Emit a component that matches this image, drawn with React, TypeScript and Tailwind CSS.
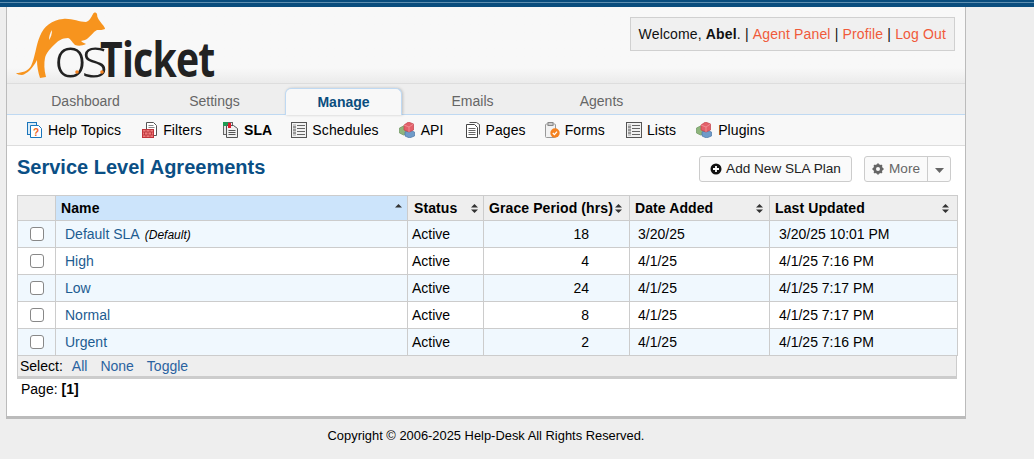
import React from "react";

const Cubes = () => (
  <svg width="17" height="16" viewBox="0 0 17 16" className="shrink-0">
    <path d="M0.500 6l4-2 4 2v5l-4 2-4-2z" fill="#8fb57c" stroke="#6d9560" strokeWidth="0.7" />
    <path d="M6 10l4.500-2 5 2v4l-5 2-4.500-2z" fill="#6f9bc9" stroke="#4c77a6" strokeWidth="0.7" />
    <path d="M5 3l4.500-3 5 2v6l-4.500 2-5-2z" fill="#e4606a" stroke="#c2424c" strokeWidth="0.7" />
    <path d="M5 3l5 2 4.500-3M10 5v5" fill="none" stroke="#f3a0a5" strokeWidth="0.7" />
  </svg>
);

const ListIcon = () => (
  <svg width="16" height="16" viewBox="0 0 16 16" className="shrink-0">
    <rect x="0.5" y="0.5" width="15" height="15" fill="#f2f2f2" stroke="#555" />
    <rect x="2" y="2" width="3" height="12" fill="#c9c9c9" />
    <path d="M6 3.500h8M6 6.500h8M6 9.500h8M6 12.500h8M2 5h3M2 8h3M2 11h3" stroke="#666" strokeWidth="1" />
  </svg>
);

const HelpIcon = () => (
  <svg width="16" height="16" viewBox="0 0 16 16" className="shrink-0">
    <rect x="0.5" y="0.5" width="9" height="12" fill="#d9ebf7" stroke="#1b75bb" />
    <path d="M3.500 3.500h8l3 3v9h-11z" fill="#fff" stroke="#1b75bb" />
    <text x="9" y="13.5" fontSize="10" fontWeight="700" fill="#f26522" textAnchor="middle" fontFamily="Liberation Sans">?</text>
  </svg>
);

const FilterIcon = () => (
  <svg width="16" height="16" viewBox="0 0 16 16" className="shrink-0">
    <path d="M4.500 0.500h7l3 3v10h-10z" fill="#fff" stroke="#555" />
    <path d="M6.500 3.500h5M6.500 5.500h6" stroke="#888" />
    <rect x="0.5" y="7.5" width="11" height="8" fill="#ee7b7b" stroke="#c0333a" />
    <path d="M1 10h10M1 13h10M4 8v2M8 8v2M2.500 10v3M6 10v3M9.500 10v3M4 13v2M8 13v2" stroke="#b22b32" strokeWidth="0.7" />
  </svg>
);

const SlaIcon = () => (
  <svg width="16" height="16" viewBox="0 0 16 16" className="shrink-0">
    <rect x="0.5" y="0.5" width="9" height="12" fill="#e8e8e8" stroke="#666" />
    <rect x="0" y="0" width="5" height="4" fill="#1f9d55" />
    <path d="M3.500 3.500h7l4 3v9h-11z" fill="#f1f1f1" stroke="#555" />
    <rect x="5" y="1" width="3" height="5" fill="#e11d2e" />
    <path d="M5.500 8.500h7M5.500 10.500h7M5.500 12.500h7" stroke="#555" />
  </svg>
);

const PagesIcon = () => (
  <svg width="16" height="16" viewBox="0 0 16 16" className="shrink-0">
    <path d="M4.500 0.500h7l3 2v10" fill="none" stroke="#555" />
    <path d="M1.500 2.500h8l3 3v10h-11z" fill="#fff" stroke="#444" />
    <path d="M3.500 6.500h7M3.500 8.500h7M3.500 10.500h7M3.500 12.500h7" stroke="#666" />
  </svg>
);

const FormsIcon = () => (
  <svg width="16" height="16" viewBox="0 0 16 16" className="shrink-0">
    <rect x="1.5" y="2" width="10" height="13.5" rx="1" fill="#f2f2f2" stroke="#999" />
    <rect x="4" y="0.5" width="5" height="3" fill="#ccc" stroke="#888" />
    <circle cx="11" cy="11" r="4.7" fill="#f58220" />
    <path d="M8.800 11l1.600 1.600 2.600-3" fill="none" stroke="#fff" strokeWidth="1.3" />
  </svg>
);

const navItems: { icon: React.ReactNode; label: string; bold?: boolean; cls?: string }[] = [
  { icon: <HelpIcon />, label: "Help Topics" },
  { icon: <FilterIcon />, label: "Filters" },
  { icon: <SlaIcon />, label: "SLA", bold: true, cls: "-mr-[2px]" },
  { icon: <ListIcon />, label: "Schedules", cls: "-mr-[1px]" },
  { icon: <Cubes />, label: "API" },
  { icon: <PagesIcon />, label: "Pages", cls: "-mr-[3px]" },
  { icon: <FormsIcon />, label: "Forms" },
  { icon: <ListIcon />, label: "Lists", cls: "-mr-[1px]" },
  { icon: <Cubes />, label: "Plugins" },
];

const Sort = ({ only }: { only?: boolean }) => (
  <svg width="7" height="11" viewBox="0 0 7 11" className="shrink-0">
    <path d="M3.500 1L7 4.500H0z" fill="#333" />
    {!only && <path d="M3.500 10L0 6.500H7z" fill="#333" />}
  </svg>
);

const rows = [
  ["Default SLA", "18", "3/20/25", "3/20/25 10:01 PM"],
  ["High", "4", "4/1/25", "4/1/25 7:16 PM"],
  ["Low", "24", "4/1/25", "4/1/25 7:17 PM"],
  ["Normal", "8", "4/1/25", "4/1/25 7:17 PM"],
  ["Urgent", "2", "4/1/25", "4/1/25 7:16 PM"],
];

const heads: [string, string][] = [
  ["Name", "pl-[5px] pr-[5px]"],
  ["Status", "pl-[6px] pr-[5px]"],
  ["Grace Period (hrs)", "pl-[5px] pr-[7px]"],
  ["Date Added", "pl-[5px] pr-[6px]"],
  ["Last Updated", "pl-[5px] pr-[8px]"],
];

const Kangaroo = () => (
  <svg width="100" height="75" viewBox="10 5 100 75" className="absolute left-[3px] top-[-2px]">
    <path
      d="M16 73 C22 73 28 71 31 66 C35 58 36 45 40 36 C44 26 52 20 63 19 C71 18 79 22 86 22 C89 21 91 18 93 14 C94 12 96 12 97 14 C97 18 99 20 102 24 C104 26 105 28 105 29 C103 30 100 30 97 30 C93 32 91 36 87 39 L85 40 L81 41 C83 43 85 43 86 44 C82 46 78 46 75 45 C72 42 70 38 68 38 C62 38 58 41 55 44 C50 49 46 53 45 58 C44 63 44 70 46 77 L40 78 C38 72 37 66 37 60 C33 68 27 74 22 75 C19 75 17 74 16 73 Z"
      fill="#f7941e"
    />
    <path d="M52 30 C50 33 49 36 49 40 C51 37 52 34 52 30Z" fill="#f8f8f8" />
    <circle cx="77" cy="72" r="1.8" fill="#f58220" />
    <circle cx="102" cy="72" r="1.8" fill="#f58220" />
  </svg>
);

export default function App() {
  return (
    <div className="min-h-[459px] bg-[#eeeeee] text-[14px] text-black" style={{ fontFamily: '"Liberation Sans", Arial, sans-serif' }}>
      <div className="h-[7px] bg-[#0a4d7e] pt-[2px]">
        <div className="h-px bg-[#5f8fb0]" />
      </div>
      <div className="ml-[6px] w-[960px] border-x border-b-[3px] border-[#bbbbbb] bg-white">
        <div className="relative flex h-[76px] items-start justify-end bg-gradient-to-b from-[#f8f8f8] from-80% to-[#ebebeb] pr-[10px] pt-[10px]">
          <div className="absolute left-[47px] top-[20px] flex items-baseline leading-none text-[#222222]" style={{ fontFamily: '"Open Sans", sans-serif' }}>
            <span className="w-[46px] text-[56px] font-light tracking-[-5px]">os</span>
            <span className="origin-left scale-x-[0.8] text-[49px] font-bold tracking-[-1px]">Ticket</span>
          </div>
          <Kangaroo />
          <div className="flex h-[34px] items-center border border-[#d0d0d0] bg-[#f0f0f0] px-[8px] text-[14px] tracking-[0.15px] text-[#111]">
            <span>Welcome, <b>Abel</b>.&nbsp;|&nbsp;</span>
            <span className="text-[#f05a3a]">Agent Panel</span>
            <span>&nbsp;|&nbsp;</span>
            <span className="text-[#f05a3a]">Profile</span>
            <span>&nbsp;|&nbsp;</span>
            <span className="text-[#f05a3a]">Log Out</span>
          </div>
        </div>
        <div className="flex h-[32px] items-end gap-[12px] border-t border-b border-t-[#dddddd] border-b-[#bfd9f2] bg-[#eeeeee] pl-[20px]">
          {["Dashboard", "Settings", "Manage", "Emails", "Agents"].map((t) =>
            t === "Manage" ? (
              <div key={t} className="relative -mb-px flex h-[27px] w-[117px] items-center justify-center rounded-t-[6px] border-x border-t border-[#bfd9f2] bg-[#f8f8f8] pt-[1px] font-bold text-[#0a4d7e] shadow-[1px_0_3px_rgba(0,0,0,0.2)]">
                {t}
              </div>
            ) : (
              <div key={t} className="flex h-[29px] w-[117px] items-center justify-center pt-[3px] text-[#666666]">
                {t}
              </div>
            )
          )}
        </div>
        <div className="flex h-[31px] items-center gap-[21px] border-b border-[#dddddd] bg-[#f8f8f8] pl-[20px] tracking-[0.1px]">
          {navItems.map((n) => (
            <div key={n.label} className={`flex items-center gap-[5px] ${n.cls ?? ""}`}>
              {n.icon}
              <span className={n.bold ? "font-bold" : ""}>{n.label}</span>
            </div>
          ))}
        </div>
        <div className="px-[10px] pt-[10px]">
          <div className="flex h-[29px] items-start justify-between pr-[4px]">
            <h2 className="text-[20px] font-bold leading-[22px] text-[#0a4f85]">Service Level Agreements</h2>
            <div className="flex gap-[12px] text-[13.6px]">
              <div className="flex h-[26px] w-[153px] items-center justify-center gap-[4px] rounded-[3px] border border-[#cccccc] bg-[#fafafa] text-[#222]">
                <svg width="12" height="12" viewBox="0 0 12 12">
                  <circle cx="6" cy="6" r="5.500" fill="#111" />
                  <path d="M6 3v6M3 6h6" stroke="#fff" strokeWidth="1.800" />
                </svg>
                Add New SLA Plan
              </div>
              <div className="flex h-[26px] w-[87px] items-center rounded-[3px] border border-[#cccccc] bg-[#fafafa] text-[#666]">
                <div className="flex flex-1 items-center justify-center gap-[5px]">
                  <svg width="12" height="12" viewBox="0 0 12 12">
                    <circle cx="6" cy="6" r="3.400" fill="none" stroke="#666" strokeWidth="2.800" />
                    <path d="M6 0.500v2M6 9.500v2M0.500 6h2M9.500 6h2M2.100 2.100l1.400 1.400M8.500 8.500l1.400 1.400M2.100 9.900l1.400-1.400M8.500 3.500l1.400-1.400" stroke="#666" strokeWidth="1.800" />
                  </svg>
                  More
                </div>
                <div className="flex h-full w-[23px] items-center justify-center border-l border-[#cccccc] pt-[2px]">
                  <svg width="9" height="5" viewBox="0 0 9 5"><path d="M0 0h9L4.500 5z" fill="#666" /></svg>
                </div>
              </div>
            </div>
          </div>
          <table className="mt-[10px] w-[940px] table-fixed border-collapse border border-[#cccccc] text-[14px]">
            <colgroup>
              <col className="w-[38px]" />
              <col className="w-[352px]" />
              <col className="w-[76px]" />
              <col className="w-[146px]" />
              <col className="w-[140px]" />
              <col className="w-[188px]" />
            </colgroup>
            <thead>
              <tr className="h-[25px] bg-[#eeeeee] text-left">
                <th className="border border-[#cccccc]" />
                {heads.map(([h, pad], i) => (
                  <th key={h} className={`border border-[#cccccc] p-0 font-bold tracking-[0.1px] ${pad} ${i === 0 ? "bg-[#cce4fb]" : ""}`}>
                    <div className="flex items-center justify-between">
                      <span className="whitespace-nowrap">{h}</span>
                      <Sort only={i === 0} />
                    </div>
                  </th>
                ))}
              </tr>
            </thead>
            <tbody>
              {rows.map((r, i) => (
                <tr key={r[0]} className={`h-[27px] ${i % 2 === 0 ? "bg-[#f0f8fe]" : "bg-white"}`}>
                  <td className="border border-[#cccccc] p-0 text-center">
                    <span className="inline-block h-[14px] w-[14px] translate-y-[2px] rounded-[3px] border border-[#888888] bg-white" />
                  </td>
                  <td className="border border-[#cccccc] p-0 pl-[9px]">
                    <span className="text-[#1d5c91]">{r[0]}</span>
                    {i === 0 && <i className="ml-[5px] text-[12px]">(Default)</i>}
                  </td>
                  <td className="border border-[#cccccc] p-0 pl-[4px]">Active</td>
                  <td className="border border-[#cccccc] p-0 pr-[40px] text-right">{r[1]}</td>
                  <td className="border border-[#cccccc] p-0 pl-[8px]">{r[2]}</td>
                  <td className="border border-[#cccccc] p-0 pl-[9px]">{r[3]}</td>
                </tr>
              ))}
            </tbody>
          </table>
          <div className="flex h-[23px] w-[940px] items-center border-x border-b-[3px] border-[#cccccc] bg-[#eeeeee] pl-[2px]">
            Select:
            <span className="ml-[9px] text-[#2a62a0]">All</span>
            <span className="ml-[13px] text-[#2a62a0]">None</span>
            <span className="ml-[13px] text-[#2a62a0]">Toggle</span>
          </div>
          <div className="h-[37px] pl-[4px] pt-[2px] leading-[16px]">
            Page: <b>[1]</b>
          </div>
        </div>
      </div>
      <div className="ml-[6px] w-[960px] pt-[9px] text-center text-[12.9px] leading-[16px]">
        Copyright © 2006-2025 Help-Desk All Rights Reserved.
      </div>
    </div>
  );
}
